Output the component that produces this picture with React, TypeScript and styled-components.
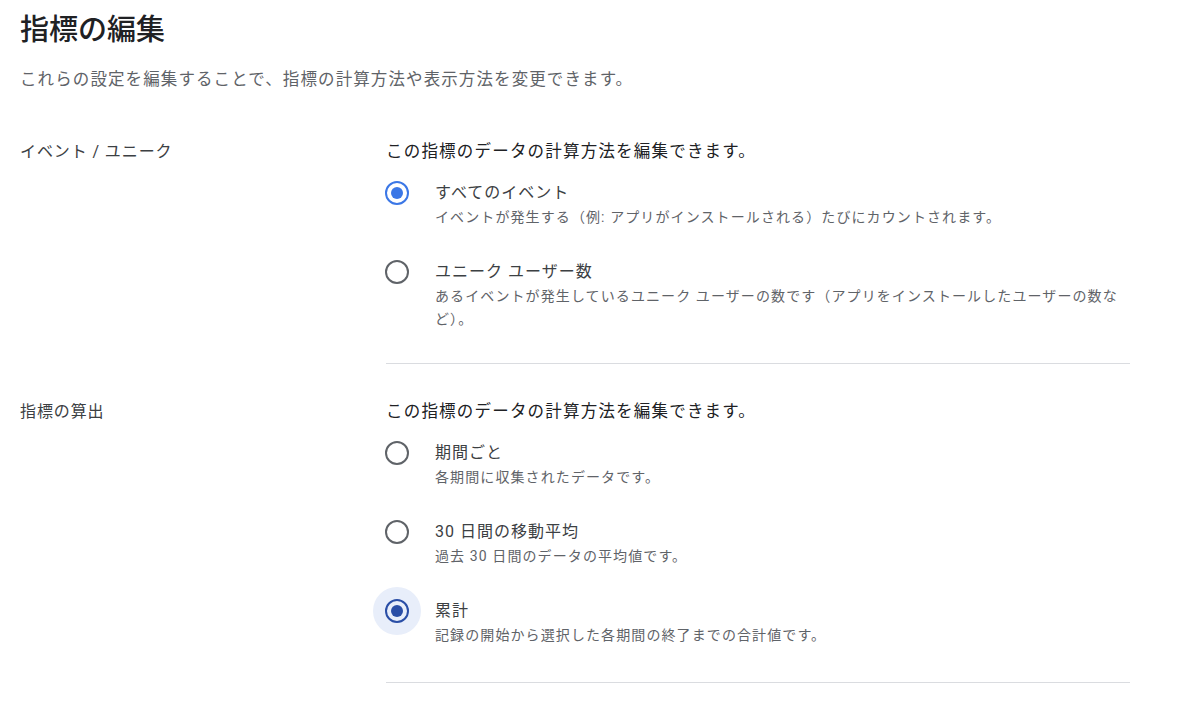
import React, { useState } from "react";
import styled, { createGlobalStyle } from "styled-components";

const Global = createGlobalStyle`
  html, body { margin: 0; padding: 0; background: #ffffff; }
  body {
    font-family: Roboto, "Noto Sans CJK JP", "Noto Sans", sans-serif;
    color: #202124;
    -webkit-font-smoothing: antialiased;
  }
`;

const Page = styled.div`
  width: 1200px;
  height: 710px;
  box-sizing: border-box;
  padding: 12px 70px 0 20px;
  overflow: hidden;
`;

const Title = styled.h1`
  margin: 0;
  font-size: 29px;
  line-height: 36px;
  font-weight: 500;
  color: #202124;
`;

const Intro = styled.p`
  margin: 20px 0 12px;
  font-size: 16.5px;
  line-height: 24px;
  letter-spacing: 1.1px;
  color: #5f6368;
`;

const Section = styled.section`
  display: grid;
  grid-template-columns: 366px 744px;
`;

const SectionLabel = styled.div`
  padding-top: 36px;
  font-size: 16px;
  line-height: 24px;
  letter-spacing: 0.9px;
  color: #3c4043;
`;

const SectionBody = styled.div<{ $bottom: number }>`
  padding: 36px 0 ${(p) => p.$bottom}px;
  border-bottom: 1px solid #dadce0;
  display: flex;
  flex-direction: column;
`;

const Heading = styled.div`
  font-size: 16.5px;
  line-height: 24px;
  letter-spacing: 1.2px;
  color: #202124;
  margin-bottom: 17px;
`;

const Options = styled.div`
  display: flex;
  flex-direction: column;
  gap: 31px;
`;

const Option = styled.label`
  display: grid;
  grid-template-columns: 49px 1fr;
  cursor: pointer;
`;

const RadioWrap = styled.span`
  position: relative;
  width: 24px;
  height: 24px;
  margin-left: -1px;
  display: flex;
  align-items: center;
  justify-content: center;
`;

const Halo = styled.span`
  position: absolute;
  left: -12px;
  top: -12px;
  width: 48px;
  height: 48px;
  border-radius: 50%;
  background: #e8eefa;
`;

const Ring = styled.span<{ $checked: boolean; $focused: boolean }>`
  position: relative;
  box-sizing: border-box;
  width: 24px;
  height: 24px;
  border-radius: 50%;
  border: 2.5px solid
    ${(p) => (p.$checked ? (p.$focused ? "#2a4ea6" : "#3b77e6") : "#5f6368")};
  display: flex;
  align-items: center;
  justify-content: center;
`;

const Dot = styled.span<{ $focused: boolean }>`
  width: 12px;
  height: 12px;
  border-radius: 50%;
  background: ${(p) => (p.$focused ? "#2a4ea6" : "#3b77e6")};
`;

const OptionText = styled.div`
  display: flex;
  flex-direction: column;
`;

const OptionTitle = styled.div`
  font-size: 16px;
  line-height: 24px;
  letter-spacing: 1px;
  color: #3c4043;
`;

const OptionDesc = styled.div`
  font-size: 14px;
  line-height: 23px;
  letter-spacing: 1.1px;
  color: #5f6368;
  padding-top: 1px;
`;

type Opt = { id: string; title: string; desc: string };

const countOptions: Opt[] = [
  {
    id: "all",
    title: "すべてのイベント",
    desc: "イベントが発生する（例: アプリがインストールされる）たびにカウントされます。",
  },
  {
    id: "unique",
    title: "ユニーク ユーザー数",
    desc: "あるイベントが発生しているユニーク ユーザーの数です（アプリをインストールしたユーザーの数など）。",
  },
];

const calcOptions: Opt[] = [
  { id: "period", title: "期間ごと", desc: "各期間に収集されたデータです。" },
  { id: "avg30", title: "30 日間の移動平均", desc: "過去 30 日間のデータの平均値です。" },
  {
    id: "cumulative",
    title: "累計",
    desc: "記録の開始から選択した各期間の終了までの合計値です。",
  },
];

function RadioGroup({
  options,
  value,
  onChange,
  focused,
}: {
  options: Opt[];
  value: string;
  onChange: (v: string) => void;
  focused?: string;
}) {
  return (
    <Options>
      {options.map((o) => {
        const checked = o.id === value;
        const isFocused = focused === o.id;
        return (
          <Option key={o.id} onClick={() => onChange(o.id)}>
            <RadioWrap>
              {isFocused && <Halo />}
              <Ring $checked={checked} $focused={isFocused}>
                {checked && <Dot $focused={isFocused} />}
              </Ring>
            </RadioWrap>
            <OptionText>
              <OptionTitle>{o.title}</OptionTitle>
              <OptionDesc>{o.desc}</OptionDesc>
            </OptionText>
          </Option>
        );
      })}
    </Options>
  );
}

export default function App() {
  const [count, setCount] = useState("all");
  const [calc, setCalc] = useState("cumulative");
  return (
    <>
      <Global />
      <Page>
        <Title>指標の編集</Title>
        <Intro>これらの設定を編集することで、指標の計算方法や表示方法を変更できます。</Intro>
        <Section>
          <SectionLabel>イベント / ユニーク</SectionLabel>
          <SectionBody $bottom={32}>
            <Heading>この指標のデータの計算方法を編集できます。</Heading>
            <RadioGroup options={countOptions} value={count} onChange={setCount} />
          </SectionBody>
        </Section>
        <Section>
          <SectionLabel>指標の算出</SectionLabel>
          <SectionBody $bottom={35}>
            <Heading>この指標のデータの計算方法を編集できます。</Heading>
            <RadioGroup
              options={calcOptions}
              value={calc}
              onChange={setCalc}
              focused="cumulative"
            />
          </SectionBody>
        </Section>
      </Page>
    </>
  );
}
